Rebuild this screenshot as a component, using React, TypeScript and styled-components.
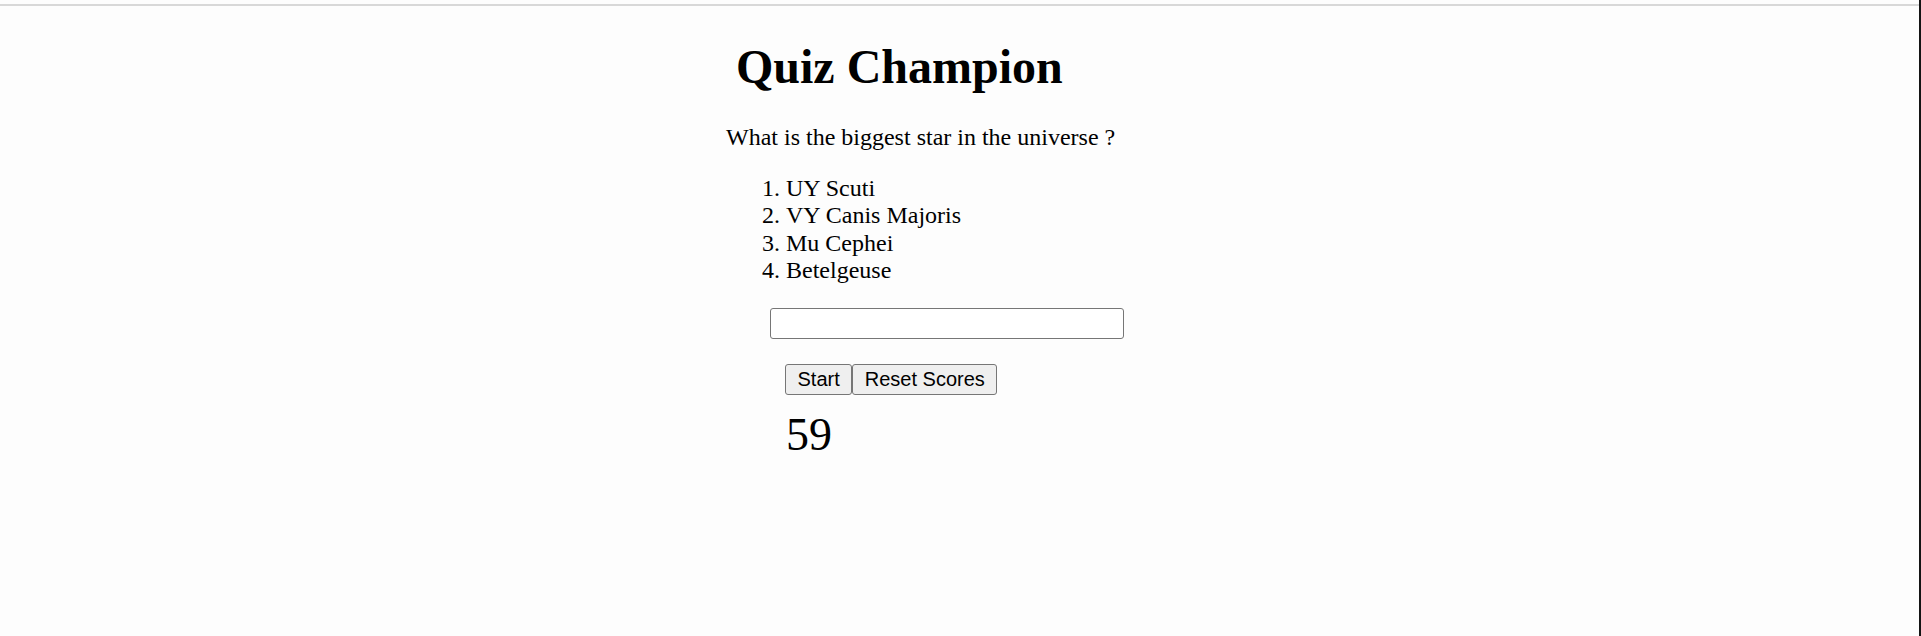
import React from 'react'
import styled, { createGlobalStyle } from 'styled-components'

const GlobalStyle = createGlobalStyle`
  html,
  body {
    margin: 0;
    padding: 0;
    background: #fdfdfd;
  }

  body {
    font-family: 'Liberation Serif', 'Times New Roman', serif;
    color: #000;
  }
`

const Page = styled.div`
  box-sizing: border-box;
  min-height: 100vh;
  padding-top: 4px;
  border-right: 2px solid #141414;
`

const TopRule = styled.div`
  height: 2px;
  background: #d8d8d8;
`

const Quiz = styled.main`
  display: flex;
  flex-direction: column;
  align-items: flex-start;
  margin-left: 726px;
`

const Title = styled.h1`
  margin: 33px 0 0 10px;
  font-size: 48px;
  font-weight: 700;
  line-height: 55px;
`

const Question = styled.p`
  margin: 29.5px 0 0;
  font-size: 24px;
  line-height: 27.6px;
`

const Options = styled.ol`
  margin: 23.6px 0 0;
  padding-left: 60px;
  font-size: 24px;
  line-height: 27.6px;
`

const AnswerInput = styled.input`
  box-sizing: border-box;
  width: 354px;
  height: 31.5px;
  margin: 22.8px 0 0 44px;
  padding: 1.5px 3px;
  border: 1.5px solid #767676;
  border-radius: 3px;
  background: #fff;
  font-family: 'Liberation Sans', Arial, sans-serif;
  font-size: 20px;
`

const Controls = styled.div`
  display: flex;
  margin: 24.5px 0 0 59px;
`

const Button = styled.button`
  box-sizing: border-box;
  height: 31.5px;
  padding: 0 11.5px;
  border: 1.5px solid #767676;
  border-radius: 3px;
  background: #efefef;
  color: #000;
  font-family: 'Liberation Sans', Arial, sans-serif;
  font-size: 20px;
  line-height: 23px;
`

const Score = styled.div`
  margin: 11.75px 0 0 60px;
  font-size: 46px;
  line-height: 55px;
`

const options = ['UY Scuti', 'VY Canis Majoris', 'Mu Cephei', 'Betelgeuse']

const App = () => {
  return (
    <>
      <GlobalStyle />
      <Page>
        <TopRule />
        <Quiz>
          <Title>Quiz Champion</Title>
          <Question>What is the biggest star in the universe ?</Question>
          <Options>
            {options.map((option) => (
              <li key={option}>{option}</li>
            ))}
          </Options>
          <AnswerInput type="text" />
          <Controls>
            <Button>Start</Button>
            <Button>Reset Scores</Button>
          </Controls>
          <Score>59</Score>
        </Quiz>
      </Page>
    </>
  )
}

export default App
